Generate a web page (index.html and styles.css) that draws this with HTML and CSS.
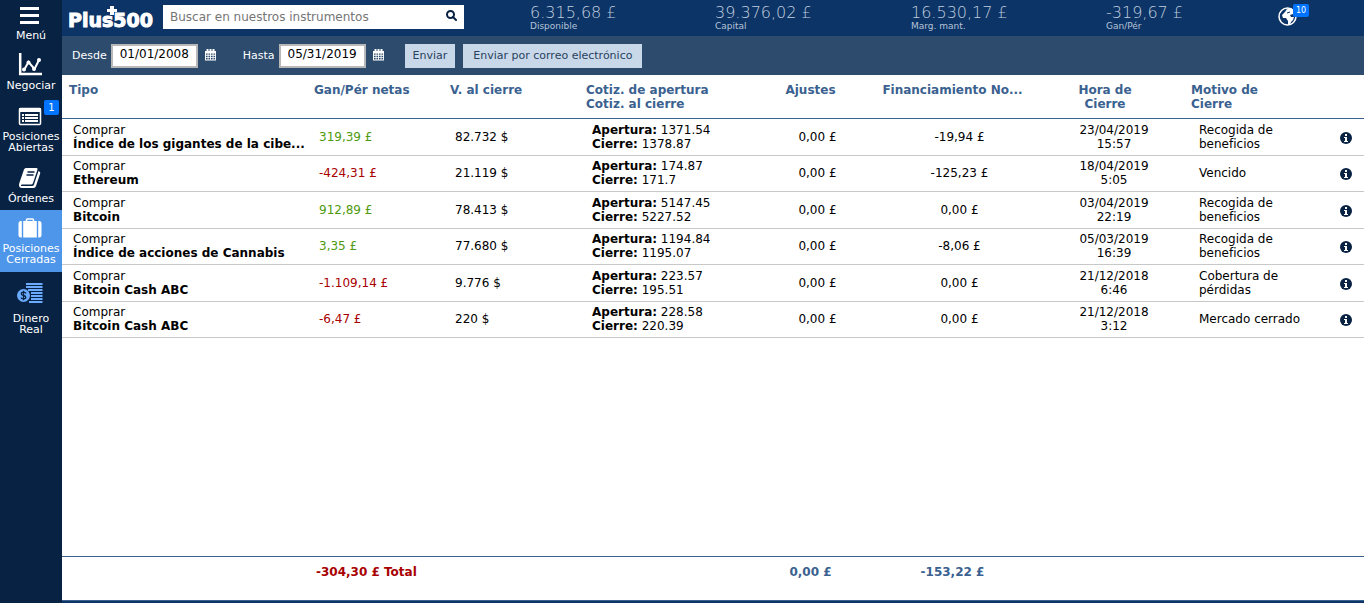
FILE: index.html
```html
<!DOCTYPE html>
<html lang="es">
<head>
<meta charset="utf-8">
<title>Plus500 - Posiciones Cerradas</title>
<link rel="stylesheet" href="styles.css">
</head>
<body>
<svg class="defs" aria-hidden="true">
  <symbol id="calendar" viewBox="0 0 11 12">
    <path fill="currentColor" fill-rule="evenodd" d="M0 2h1.500V0h2v2h1V0h2v2h1V0h2v2H11v9.500H0zM1 4.500v1.300h1.600V4.500zm2.500 0v1.300h1.600V4.500zm2.500 0v1.300h1.600V4.500zm2.500 0v1.300h1.600V4.500zM1 6.700v1.500h1.600V6.700zm2.500 0v1.500h1.600V6.700zm2.500 0v1.500h1.600V6.700zm2.500 0v1.500h1.600V6.700zM1 9.100v1.500h1.600V9.100zm2.500 0v1.500h1.600V9.100zm2.500 0v1.500h1.600V9.100zm2.500 0v1.500h1.600V9.100z"/>
  </symbol>
  <symbol id="info" viewBox="0 0 12 12">
    <circle cx="6" cy="6" r="6" fill="#082243"/>
    <path fill="#fff" d="M5 2h2v2H5zM4 5h3v4h1v1H4V9h1V6H4z"/>
  </symbol>
</svg>
<nav class="sidebar">
  <a class="nav menu" href="#">
    <svg width="20" height="18" viewBox="0 0 20 18"><path fill="#fff" d="M0 0h19v3H0zm0 7h19v3H0zm0 7h19v3H0z"/></svg>
    <span>Menú</span>
  </a>
  <a class="nav trade" href="#">
    <svg width="24" height="24" viewBox="0 0 24 24"><path d="M2.200 1v21h21.800" fill="none" stroke="#fff" stroke-width="2.500"/><path d="M6 18l4.500-8 6 7L21 8" fill="none" stroke="#fff" stroke-width="2"/><g fill="#fff"><circle cx="6" cy="17.500" r="2"/><circle cx="10.500" cy="10.500" r="2"/><circle cx="16" cy="17" r="2"/><circle cx="21" cy="8" r="2"/></g></svg>
    <span>Negociar</span>
  </a>
  <a class="nav open" href="#">
    <svg width="24" height="19" viewBox="0 0 24 19"><rect x="1.500" y="1.500" width="21" height="16" rx="1" fill="none" stroke="#fff" stroke-width="1.500"/><path fill="#fff" d="M1 1h22v4H1zM4 7h2v2H4zm3 0h13v2H7zm-3 3h2v2H4zm3 0h13v2H7zm-3 3h2v2H4zm3 0h13v2H7z"/></svg>
    <span>Posiciones<br>Abiertas</span>
    <b class="badge">1</b>
  </a>
  <a class="nav orders" href="#">
    <svg width="22" height="20" viewBox="0 0 22 20"><path fill="#fff" d="M7 0h10.500q1.500 0 1 1.500L14 15q-.5 1.500-2 1.500H3Q1.500 16.500 2 18h11q1.500 0 2-1.500L19.500 3l1.500 1q.5.500 0 2l-4 12q-.5 2-2.500 2H3Q0 20 0 17q0-1 .5-2.500L5 1.500Q5.500 0 7 0z"/><path d="M8.500 4h7M7.500 7h7" stroke="#082243" stroke-width="1.500"/></svg>
    <span>Órdenes</span>
  </a>
  <a class="nav closed" href="#" aria-current="page">
    <svg width="24" height="20" viewBox="0 0 24 20"><path fill="#fff" d="M3.800 3v16.500H3Q.5 19.500.5 17V5.500Q.5 3 3 3zM20.200 3v16.500h.8q2.500 0 2.500-2.500V5.500Q23.500 3 21 3zM5.200 3h13.600v16.500H5.200z"/><path d="M8.500 4V1.800q0-.8.8-.8h5.400q.8 0 .8.800V4" fill="none" stroke="#fff" stroke-width="1.500"/></svg>
    <span>Posiciones<br>Cerradas</span>
  </a>
  <a class="nav money" href="#">
    <svg width="26" height="20" viewBox="0 0 26 20"><path fill="#6aaaff" d="M9 0h16.500v2H9zm0 3h16.500v2H9zm2 3h14.500v2H11zm3 3h11.500v2H14zm0 3h11.500v2H14zm0 3h11.500v2H14zm-2 3h13.500v2H12z"/><circle cx="6.500" cy="12.500" r="6.500" fill="#6aaaff"/><path d="M9 10.500Q8.500 9.200 6.500 9.200 4.300 9.200 4.300 10.800q0 1.400 2.200 1.700t2.300 1.700q0 1.600-2.300 1.600T4 14.500M6.500 7.800v9.400" fill="none" stroke="#082243" stroke-width="1.300"/></svg>
    <span>Dinero<br>Real</span>
  </a>
</nav>
<div class="page">
  <header class="topbar">
    <a class="logo" href="#" aria-label="Plus500">Plus500<svg class="cross" width="10" height="9" viewBox="0 0 10 9" aria-hidden="true"><path fill="#fff" d="M3 0h4v3h3v3H7v3H3V6H0V3h3z"/></svg></a>
    <form class="search">
      <input type="text" placeholder="Buscar en nuestros instrumentos" aria-label="Buscar en nuestros instrumentos">
      <button type="button" aria-label="Buscar"><svg width="11" height="11" viewBox="0 0 11 11"><circle cx="4.500" cy="4.500" r="3.500" fill="none" stroke="#082243" stroke-width="2"/><path d="M7 7l3 3" stroke="#082243" stroke-width="2" stroke-linecap="round"/></svg></button>
    </form>
    <div class="stats">
      <div class="stat"><span class="value">6.315,68 £</span><span class="name">Disponible</span></div>
      <div class="stat"><span class="value">39.376,02 £</span><span class="name">Capital</span></div>
      <div class="stat"><span class="value">16.530,17 £</span><span class="name">Marg. mant.</span></div>
      <div class="stat"><span class="value">-319,67 £</span><span class="name">Gan/Pér</span></div>
    </div>
    <a class="news" href="#" aria-label="Noticias">
      <svg width="19" height="19" viewBox="0 0 19 19"><circle cx="9.500" cy="9.500" r="8.500" fill="none" stroke="#fff" stroke-width="1.500"/><path fill="#fff" d="M4 8l3-3 2-3 4-1 3 3-1 3-3 1 1 2 3 0-1 3-2 2-1 3h-2l0-4-2-3-3 0z"/><path d="M9 6l3-1" stroke="#0c3466"/></svg>
      <b class="badge">10</b>
    </a>
  </header>
  <form class="filters">
    <label for="from">Desde</label>
    <input id="from" type="text" value="01/01/2008">
    <button class="pick" type="button" aria-label="Elegir fecha inicial"><svg width="11" height="12"><use href="#calendar"/></svg></button>
    <label class="until" for="to">Hasta</label>
    <input id="to" type="text" value="05/31/2019">
    <button class="pick" type="button" aria-label="Elegir fecha final"><svg width="11" height="12"><use href="#calendar"/></svg></button>
    <button class="send first" type="button">Enviar</button>
    <button class="send mail" type="button">Enviar por correo electrónico</button>
  </form>
  <main class="list">
    <table>
      <colgroup><col class="c-type"><col class="c-net"><col class="c-value"><col class="c-rate"><col class="c-adjust"><col class="c-fund"><col class="c-time"><col class="c-reason"><col class="c-info"></colgroup>
      <thead>
        <tr><th>Tipo</th><th>Gan/Pér netas</th><th>V. al cierre</th><th>Cotiz. de apertura<br>Cotiz. al cierre</th><th class="mid">Ajustes</th><th class="mid">Financiamiento No...</th><th class="mid">Hora de<br>Cierre</th><th>Motivo de<br>Cierre</th><td></td></tr>
      </thead>
      <tbody>
        <tr><td>Comprar<br><b>Índice de los gigantes de la cibe...</b></td><td class="net gain">319,39 £</td><td class="net">82.732 $</td><td class="rate"><b>Apertura:</b> 1371.54<br><b>Cierre:</b> 1378.87</td><td class="mid">0,00 £</td><td class="mid">-19,94 £</td><td class="time">23/04/2019<br>15:57</td><td class="reason">Recogida de<br>beneficios</td><td class="more"><button type="button" aria-label="Detalles"><svg width="12" height="12"><use href="#info"/></svg></button></td></tr>
        <tr><td>Comprar<br><b>Ethereum</b></td><td class="net loss">-424,31 £</td><td class="net">21.119 $</td><td class="rate"><b>Apertura:</b> 174.87<br><b>Cierre:</b> 171.7</td><td class="mid">0,00 £</td><td class="mid">-125,23 £</td><td class="time">18/04/2019<br>5:05</td><td class="reason">Vencido</td><td class="more"><button type="button" aria-label="Detalles"><svg width="12" height="12"><use href="#info"/></svg></button></td></tr>
        <tr><td>Comprar<br><b>Bitcoin</b></td><td class="net gain">912,89 £</td><td class="net">78.413 $</td><td class="rate"><b>Apertura:</b> 5147.45<br><b>Cierre:</b> 5227.52</td><td class="mid">0,00 £</td><td class="mid">0,00 £</td><td class="time">03/04/2019<br>22:19</td><td class="reason">Recogida de<br>beneficios</td><td class="more"><button type="button" aria-label="Detalles"><svg width="12" height="12"><use href="#info"/></svg></button></td></tr>
        <tr><td>Comprar<br><b>Índice de acciones de Cannabis</b></td><td class="net gain">3,35 £</td><td class="net">77.680 $</td><td class="rate"><b>Apertura:</b> 1194.84<br><b>Cierre:</b> 1195.07</td><td class="mid">0,00 £</td><td class="mid">-8,06 £</td><td class="time">05/03/2019<br>16:39</td><td class="reason">Recogida de<br>beneficios</td><td class="more"><button type="button" aria-label="Detalles"><svg width="12" height="12"><use href="#info"/></svg></button></td></tr>
        <tr><td>Comprar<br><b>Bitcoin Cash ABC</b></td><td class="net loss">-1.109,14 £</td><td class="net">9.776 $</td><td class="rate"><b>Apertura:</b> 223.57<br><b>Cierre:</b> 195.51</td><td class="mid">0,00 £</td><td class="mid">0,00 £</td><td class="time">21/12/2018<br>6:46</td><td class="reason">Cobertura de<br>pérdidas</td><td class="more"><button type="button" aria-label="Detalles"><svg width="12" height="12"><use href="#info"/></svg></button></td></tr>
        <tr><td>Comprar<br><b>Bitcoin Cash ABC</b></td><td class="net loss">-6,47 £</td><td class="net">220 $</td><td class="rate"><b>Apertura:</b> 228.58<br><b>Cierre:</b> 220.39</td><td class="mid">0,00 £</td><td class="mid">0,00 £</td><td class="time">21/12/2018<br>3:12</td><td class="reason">Mercado cerrado</td><td class="more"><button type="button" aria-label="Detalles"><svg width="12" height="12"><use href="#info"/></svg></button></td></tr>
      </tbody>
    </table>
  </main>
  <footer class="totals">
    <table>
      <colgroup><col class="c-type"><col class="c-net"><col class="c-value"><col class="c-rate"><col class="c-adjust"><col class="c-fund"><col class="c-time"><col class="c-reason"><col class="c-info"></colgroup>
      <tbody><tr><td></td><td class="loss">-304,30 £ Total</td><td></td><td></td><td class="mid">0,00 £</td><td class="mid">-153,22 £</td><td></td><td></td><td></td></tr></tbody>
    </table>
  </footer>
</div>
</body>
</html>
```
FILE: styles.css
```css
* { box-sizing: border-box; }
body {
  margin: 0;
  min-height: 100vh;
  display: flex;
  background: #fff;
  color: #000;
  font: 12px/14px "DejaVu Sans", sans-serif;
}
input, button { font: inherit; margin: 0; border-radius: 0; }
button { border: 0; padding: 0; background: none; cursor: pointer; }
a { color: inherit; text-decoration: none; }
svg { display: block; }
.defs { position: absolute; width: 0; height: 0; }

/* Sidebar */
.sidebar {
  flex: 0 0 62px;
  background: #082243;
  color: #fff;
  font-size: 11px;
  line-height: 11px;
  text-align: center;
}
.nav {
  position: relative;
  display: flex;
  flex-direction: column;
  align-items: center;
}
.nav svg { margin-right: 2px; }
.menu { padding-top: 7px; height: 52px; gap: 5px; }
.trade { height: 54px; gap: 4px; }
.open { height: 62px; padding-top: 1px; gap: 5px; }
.orders { height: 42px; gap: 5px; }
.closed { height: 62px; padding-top: 8px; gap: 5px; background: #4d96ea; }
.money { padding-top: 11px; gap: 10px; }
.badge {
  position: absolute;
  border-radius: 2px;
  background: #0074ff;
  color: #fff;
  font-weight: normal;
  text-align: center;
}
.open .badge { top: -6px; right: 3px; width: 15px; height: 15px; font-size: 10px; line-height: 15px; }

/* Top bar */
.page { flex: 1; min-width: 0; display: flex; flex-direction: column; border-bottom: 2px solid #0c3466; }
.topbar {
  height: 36px;
  display: flex;
  align-items: flex-start;
  background: #0c3466;
}
.logo {
  position: relative;
  width: 101px;
  padding: 9px 0 0 6px;
  color: #fff;
  font-size: 19px;
  font-weight: bold;
  line-height: 22px;
  -webkit-text-stroke: 1px #fff;
}
.cross { position: absolute; left: 45px; top: 6px; }
.search {
  width: 301px;
  height: 24px;
  margin-top: 5px;
  display: flex;
  background: #fff;
}
.search input { flex: 1; min-width: 0; border: 0; padding: 0 7px; background: none; outline: 0; }
.search input::placeholder { color: #757575; opacity: 1; }
.search button { width: 25px; padding-bottom: 3px; display: grid; place-items: center; }
.stats {
  flex: 1;
  display: grid;
  grid-template-columns: 185fr 196fr 195fr 172fr;
  padding: 3px 0 0 66px;
  color: #b4c3d8;
}
.stat { display: flex; flex-direction: column; white-space: nowrap; }
.value { font-size: 16px; font-weight: 200; line-height: 19px; color: #c2cedf; }
.name { font-size: 9px; line-height: 8px; }
.news { position: relative; width: 86px; padding-top: 7px; }
.news .badge { left: 15px; top: 4px; width: 16px; height: 13px; font-size: 8px; line-height: 14px; }

/* Date filter */
.filters {
  height: 39px;
  padding: 0 10px;
  display: flex;
  align-items: center;
  background: #2d4b6d;
  color: #fff;
  font-size: 11px;
}
.filters label { padding-top: 1px; }
.filters input {
  width: 87px;
  height: 24px;
  margin: 0 7px 0 4px;
  padding: 0 0 3px 7px;
  border: 2px solid #b8b8b8;
  background: #fff;
  color: #000;
  font-size: 12px;
}
.pick { color: #fff; padding-bottom: 2px; }
.until { margin-left: 27px; }
.send {
  height: 24px;
  padding: 0 8px;
  background: #c9d8e8;
  color: #27415f;
  white-space: nowrap;
}
.first { margin: 0 8px 0 21px; }
.mail { padding: 0 10px; }

/* Closed positions */
.list { flex: 1; }
table { width: 100%; table-layout: fixed; border-collapse: separate; border-spacing: 0; }
.c-type { width: 245px; }
.c-net, .c-value { width: 136px; }
.c-rate { width: 163px; }
.c-adjust { width: 137px; }
.c-fund { width: 147px; }
.c-time { width: 158px; }
.c-reason { width: 144px; }
.c-info { width: 36px; }
th, td { padding: 0; text-align: left; white-space: nowrap; }
th, thead td {
  height: 44px;
  padding: 8px 0 0 7px;
  border-bottom: 1px solid #3a618f;
  color: #3a618f;
  vertical-align: top;
}
.list tbody td { height: 36px; padding: 0 0 1px 11px; border-bottom: 1px solid #c8c8c8; }
.list tbody tr:nth-child(odd) td { height: 37px; }
.list th.mid { padding-left: 0; text-align: center; }
.list td.mid { padding-left: 14px; text-align: center; }
.list td.net { padding-left: 12px; }
.list td.rate { padding-left: 13px; }
.list td.time { padding-left: 18px; text-align: center; }
.list td.reason { padding-left: 15px; }
.list td.more { padding-left: 12px; }
.more button { display: block; padding-top: 2px; }
.gain { color: #4f9a10; }
.loss { color: #a80000; }
.totals { border-top: 1px solid #3a618f; border-bottom: 1px solid #3a618f; color: #3a618f; font-weight: bold; }
.totals td { height: 43px; padding: 8px 0 0 9px; vertical-align: top; }
.totals td.mid { padding-left: 0; text-align: center; }
```
